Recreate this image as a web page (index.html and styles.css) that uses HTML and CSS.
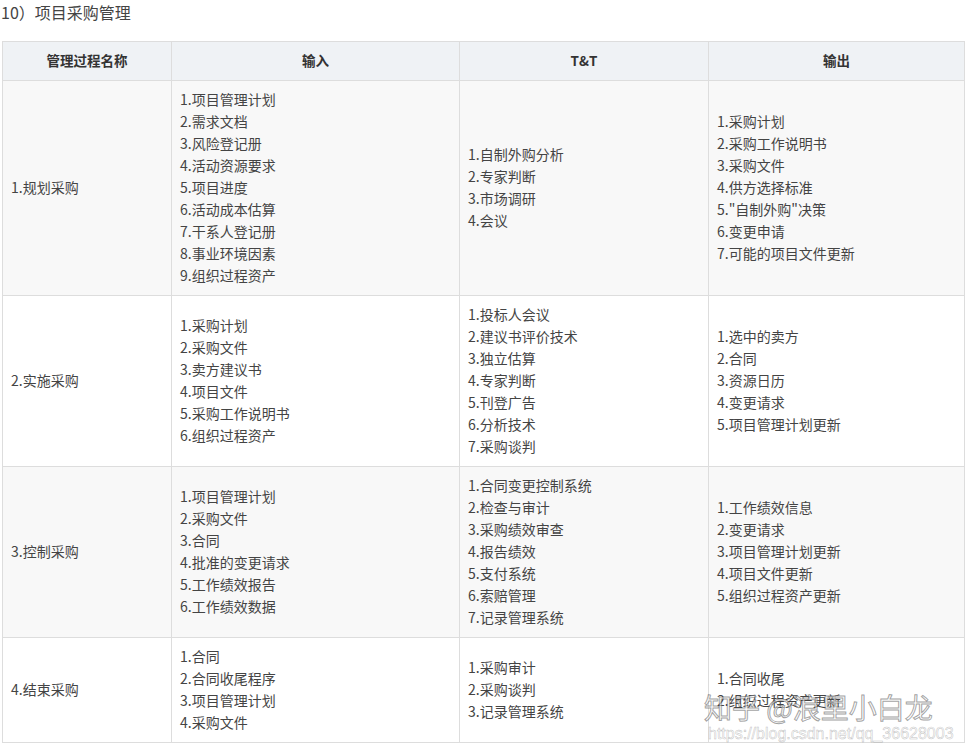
FILE: index.html
```html
<!DOCTYPE html>
<html lang="zh">
<head>
<meta charset="utf-8">
<link rel="stylesheet" href="styles.css">
</head>
<body>
<div class="page">
  <h3 class="title">10）项目采购管理</h3>
  <table class="proc">
    <colgroup>
      <col class="c1"><col class="c2"><col class="c3"><col class="c4">
    </colgroup>
    <thead>
      <tr><th>管理过程名称</th><th>输入</th><th>T&amp;T</th><th>输出</th></tr>
    </thead>
    <tbody>
      <tr class="alt">
        <td>1.规划采购</td>
        <td>1.项目管理计划<br>2.需求文档<br>3.风险登记册<br>4.活动资源要求<br>5.项目进度<br>6.活动成本估算<br>7.干系人登记册<br>8.事业环境因素<br>9.组织过程资产</td>
        <td>1.自制外购分析<br>2.专家判断<br>3.市场调研<br>4.会议</td>
        <td>1.采购计划<br>2.采购工作说明书<br>3.采购文件<br>4.供方选择标准<br>5."自制外购"决策<br>6.变更申请<br>7.可能的项目文件更新</td>
      </tr>
      <tr>
        <td>2.实施采购</td>
        <td>1.采购计划<br>2.采购文件<br>3.卖方建议书<br>4.项目文件<br>5.采购工作说明书<br>6.组织过程资产</td>
        <td>1.投标人会议<br>2.建议书评价技术<br>3.独立估算<br>4.专家判断<br>5.刊登广告<br>6.分析技术<br>7.采购谈判</td>
        <td>1.选中的卖方<br>2.合同<br>3.资源日历<br>4.变更请求<br>5.项目管理计划更新</td>
      </tr>
      <tr class="alt">
        <td>3.控制采购</td>
        <td>1.项目管理计划<br>2.采购文件<br>3.合同<br>4.批准的变更请求<br>5.工作绩效报告<br>6.工作绩效数据</td>
        <td>1.合同变更控制系统<br>2.检查与审计<br>3.采购绩效审查<br>4.报告绩效<br>5.支付系统<br>6.索赔管理<br>7.记录管理系统</td>
        <td>1.工作绩效信息<br>2.变更请求<br>3.项目管理计划更新<br>4.项目文件更新<br>5.组织过程资产更新</td>
      </tr>
      <tr>
        <td>4.结束采购</td>
        <td>1.合同<br>2.合同收尾程序<br>3.项目管理计划<br>4.采购文件</td>
        <td>1.采购审计<br>2.采购谈判<br>3.记录管理系统</td>
        <td>1.合同收尾<br>2.组织过程资产更新</td>
      </tr>
    </tbody>
  </table>
  <div class="watermark">
    <div class="wm-main">知乎 @浪里小白龙</div>
    <div class="wm-url">https://blog.csdn.net/qq_36628003</div>
  </div>
</div>
</body>
</html>
```
FILE: styles.css
```css
html, body {
  margin: 0;
  padding: 0;
  background: #fff;
}
body {
  font-family: "Noto Sans CJK SC", "Microsoft YaHei", sans-serif;
  color: #444;
  overflow: hidden;
}
.page {
  position: relative;
  padding: 0 0 0 2px;
  width: 965px;
  height: 747px;
}
.title {
  margin: 0 0 0 -1px;
  padding-top: 1px;
  font-size: 16px;
  font-weight: normal;
  line-height: 22px;
  height: 40px;
  color: #444;
}
.proc {
  border-collapse: collapse;
  width: 963px;
  table-layout: fixed;
  font-size: 14px;
  line-height: 22px;
}
.c1 { width: 169px; }
.c2 { width: 288px; }
.c3 { width: 249px; }
.c4 { width: 256px; }
.proc th, .proc td {
  border: 1px solid #ddd;
  padding: 7px 8px 9px;
  vertical-align: middle;
  text-align: left;
}
.proc th {
  background: #eff2f5;
  font-weight: bold;
  text-align: center;
  color: #333;
  font-size: 13.5px;
  padding: 7px 8px 9px;
}
.proc tr.alt td {
  background: #f8f8f8;
}
.proc td {
  color: #444;
  background: #fff;
}
.watermark {
  position: absolute;
  left: 704px;
  top: 690px;
  width: 262px;
  pointer-events: none;
}
.wm-main {
  font-size: 28px;
  line-height: 34px;
  color: rgba(255, 255, 255, 0.6);
  -webkit-text-stroke: 1px rgba(70, 70, 70, 0.5);
  white-space: nowrap;
}
.wm-url {
  font-family: "Liberation Sans", Arial, sans-serif;
  font-size: 16px;
  line-height: 18px;
  margin-left: 4px;
  margin-top: 1px;
  color: rgba(255, 255, 255, 0.6);
  -webkit-text-stroke: 0.5px rgba(130, 130, 130, 0.5);
  white-space: nowrap;
}
```
